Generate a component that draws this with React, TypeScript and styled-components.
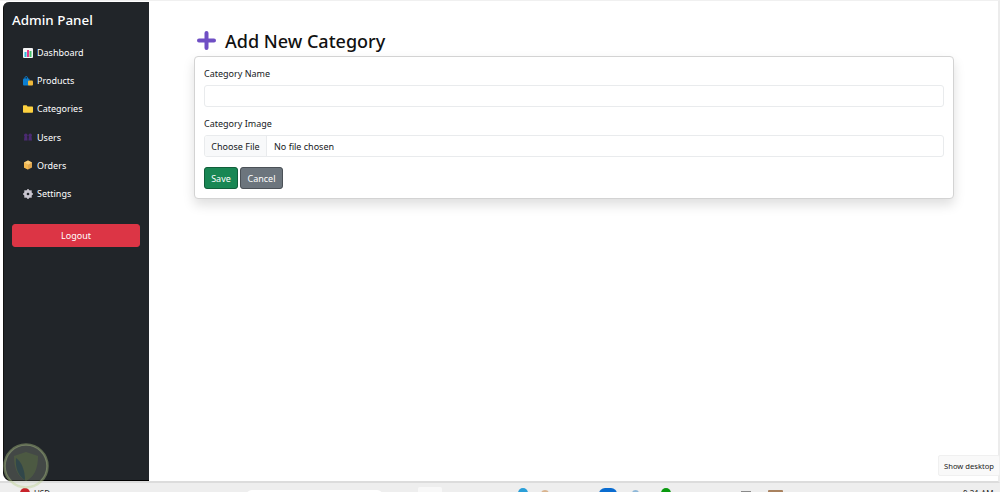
import styled, { createGlobalStyle } from 'styled-components'

const GlobalStyle = createGlobalStyle`
  html, body {
    margin: 0;
    padding: 0;
    background: #fff;
    overflow: hidden;
  }
  * { box-sizing: border-box; }
`
const Page = styled.div`
  position: relative;
  width: 1000px;
  height: 492px;
  overflow: hidden;
  display: flex;
  flex-direction: column;
  font-family: "Noto Sans", "Open Sans", sans-serif;
  color: #16191c;
  background: #fff;
`
const Workspace = styled.div`
  height: 483px;
  flex: none;
  display: flex;
  padding: 1px 3px 0 3px;
  border-top: 1px solid #f0f0f0;
  border-right: 2px solid #ececec;
  border-bottom: 2px solid #dcdcdc;
`
const Sidebar = styled.aside`
  width: 146px;
  flex: none;
  background: #212529;
  border-radius: 6px 0 0 8px;
  border-left: 1px solid #111;
  border-bottom: 1px solid #000;
  padding: 8px 8px 0 8px;
  color: #fff;
`
const Brand = styled.h1`
  margin: 0 0 8.5px 0;
  font-size: 13.4px;
  line-height: 20px;
  font-weight: 500;
`
const Nav = styled.nav`
  display: flex;
  flex-direction: column;
  padding-left: 11px;
`
const NavItem = styled.a`
  height: 28.2px;
  display: flex;
  align-items: center;
  gap: 4px;
  font-size: 9px;
  color: #fff;
`
const IconBox = styled.svg`
  width: 10px;
  height: 10px;
  flex: none;
`
const LogoutButton = styled.button`
  display: block;
  width: 128px;
  height: 23px;
  margin-top: 16.5px;
  border: 1px solid #dc3545;
  border-radius: 3px;
  background: #dc3545;
  color: #fff;
  font-family: inherit;
  font-size: 9px;
  padding: 0;
`
const Content = styled.main`
  flex: 1;
  padding: 27px 45px 0 45px;
`
const Title = styled.h2`
  margin: 0 0 2px 0;
  height: 25px;
  padding: 0 0 2px 3px;
  display: flex;
  align-items: center;
  gap: 9px;
  font-size: 18px;
  font-weight: 500;
  color: #111;
`
const Card = styled.section`
  width: 760px;
  height: 143px;
  background: #fff;
  border: 1px solid #d3d3d3;
  border-radius: 4px;
  box-shadow: 0 6px 12px rgba(0, 0, 0, 0.13);
  padding: 10px 9px 0 9px;
`
const Label = styled.label`
  display: block;
  font-size: 9px;
  line-height: 14px;
  margin-bottom: 4px;
`
const Field = styled.div`
  height: 22px;
  width: 740px;
  border: 1px solid #e9ebed;
  border-radius: 3px;
  margin-bottom: 10px;
  display: flex;
  align-items: stretch;
  font-size: 9px;
  overflow: hidden;
`
const FileButton = styled.span`
  width: 62px;
  flex: none;
  display: flex;
  align-items: center;
  justify-content: center;
  background: #f8f9fa;
  border-right: 1px solid #e9ebed;
`
const FileName = styled.span`
  display: flex;
  align-items: center;
  padding-left: 7px;
`
const Actions = styled.div`
  display: flex;
  gap: 2px;
`
const ActionButton = styled.button<{ $color: string; $width: number }>`
  width: ${p => p.$width}px;
  height: 22px;
  padding: 0;
  border: 1px solid ${p => p.$color};
  outline: 1px solid rgba(0, 0, 0, 0.3);
  outline-offset: -1px;
  border-radius: 3px;
  background: ${p => p.$color};
  color: #fff;
  font-family: inherit;
  font-size: 9px;
`
const Taskbar = styled.footer`
  flex: 1;
  background: #eeeeee;
  display: flex;
  align-items: flex-start;
  padding: 4px 0 0 20px;
  overflow: hidden;
  font-size: 8px;
  line-height: 10px;
  color: #222;
`
const TrayIcon = styled.span<{ $color: string; $width: number; $gap: number; $top: number; $radius?: number }>`
  width: ${p => p.$width}px;
  height: 12px;
  flex: none;
  margin: ${p => p.$top}px 0 0 ${p => p.$gap}px;
  border-radius: ${p => p.$radius ?? 6}px ${p => p.$radius ?? 6}px 0 0;
  background: ${p => p.$color};
`
const TrayText = styled.span<{ $gap: number }>`
  flex: none;
  margin: 2px 0 0 ${p => p.$gap}px;
`
const SearchBox = styled.span`
  width: 137px;
  height: 12px;
  flex: none;
  margin: 3px 0 0 196px;
  background: #fff;
  border-radius: 6px;
`
const PeekTip = styled.div`
  position: absolute;
  right: 0;
  top: 455px;
  width: 62px;
  height: 21px;
  display: flex;
  align-items: center;
  justify-content: center;
  font-size: 7.6px;
  background: #f9f9f9;
  border: 1px solid #f0f0f0;
  border-radius: 2px;
  color: #222;
`
const Watermark = styled.svg`
  position: absolute;
  left: 2px;
  top: 442px;
  width: 50px;
  height: 50px;
  filter: blur(0.6px);
`

function App() {
  return (
    <Page>
      <GlobalStyle />
      <Workspace>
        <Sidebar>
          <Brand>Admin Panel</Brand>
          <Nav>
            <NavItem>
              <IconBox viewBox="0 0 10 10">
                <rect width="10" height="10" rx="1" fill="#f4f4f4" />
                <rect x="1.5" y="4" width="2" height="5" fill="#2fb8d8" />
                <rect x="4" y="2" width="2" height="7" fill="#e8388a" />
                <rect x="6.5" y="3" width="2" height="6" fill="#47c26c" />
              </IconBox>
              Dashboard
            </NavItem>
            <NavItem>
              <IconBox viewBox="0 0 10 10">
                <rect x="0" y="2.5" width="6.5" height="7" rx="1" fill="#0b7ed0" />
                <path d="M2 3V1.4C2 .4 4.5 .4 4.5 1.4V3" stroke="#0b7ed0" fill="none" />
                <rect x="5" y="4.5" width="5" height="5" rx="1" fill="#f0b93a" />
              </IconBox>
              Products
            </NavItem>
            <NavItem>
              <IconBox viewBox="0 0 10 10">
                <path d="M0 2.2C0 1.6.4 1.2 1 1.2h2.6l1 1.2H9c.6 0 1 .4 1 1v4.4c0 .6-.4 1-1 1H1c-.6 0-1-.4-1-1z" fill="#fdd13f" />
              </IconBox>
              Categories
            </NavItem>
            <NavItem>
              <IconBox viewBox="0 0 10 10">
                <circle cx="2.8" cy="3.4" r="1.8" fill="#4b2a72" />
                <circle cx="7.2" cy="3.4" r="1.8" fill="#4b2a72" />
                <path d="M1 8.5 1.4 5h2.8l.4 3.5zM5.4 8.5 5.8 5h2.8l.4 3.5z" fill="#4b2a72" />
              </IconBox>
              Users
            </NavItem>
            <NavItem>
              <IconBox viewBox="0 0 10 10">
                <path d="M5 .6 9 2.6v4.8L5 9.6 1 7.4V2.6z" fill="#e0a64e" />
                <path d="M5 .6 9 2.6 5 4.8 1 2.6z" fill="#f6cf7d" />
                <path d="M5 4.8v4.8L1 7.4V2.6z" fill="#f2b84f" />
              </IconBox>
              Orders
            </NavItem>
            <NavItem>
              <IconBox viewBox="0 0 10 10">
                <circle cx="5" cy="5" r="3.1" fill="none" stroke="#c9c6d0" strokeWidth="1.9" />
                <path d="M5 0v10M0 5h10M1.5 1.5l7 7M8.5 1.5l-7 7" stroke="#c9c6d0" strokeWidth="1.5" />
                <circle cx="5" cy="5" r="1.3" fill="#212529" />
              </IconBox>
              Settings
            </NavItem>
          </Nav>
          <LogoutButton>Logout</LogoutButton>
        </Sidebar>
        <Content>
          <Title>
            <svg width="19" height="19" viewBox="0 0 19 19">
              <path d="M9.5 2v15M2 9.5h15" stroke="#6f4fc4" strokeWidth="4" strokeLinecap="round" />
            </svg>
            Add New Category
          </Title>
          <Card>
            <Label>Category Name</Label>
            <Field />
            <Label>Category Image</Label>
            <Field>
              <FileButton>Choose File</FileButton>
              <FileName>No file chosen</FileName>
            </Field>
            <Actions>
              <ActionButton $color="#198754" $width={34}>Save</ActionButton>
              <ActionButton $color="#6c757d" $width={43}>Cancel</ActionButton>
            </Actions>
          </Card>
        </Content>
      </Workspace>
      <Taskbar>
        <TrayIcon $color="#c8242b" $width={10} $gap={0} $top={1} />
        <TrayText $gap={4}>USD</TrayText>
        <SearchBox />
        <TrayIcon $color="#f8f8f8" $width={24} $gap={35} $top={0} $radius={2} />
        <TrayIcon $color="#2a9fd8" $width={10} $gap={76} $top={1} />
        <TrayIcon $color="#d9b48f" $width={8} $gap={13} $top={3} />
        <TrayIcon $color="#0a6cd0" $width={18} $gap={50} $top={1} />
        <TrayIcon $color="#8fb8d8" $width={7} $gap={15} $top={3} />
        <TrayIcon $color="#0a9a10" $width={10} $gap={22} $top={1} />
        <TrayIcon $color="#8a8a8a" $width={10} $gap={70} $top={4} $radius={0} />
        <TrayIcon $color="#a9825f" $width={15} $gap={17} $top={3} $radius={1} />
        <TrayText $gap={180}>9:31 AM</TrayText>
      </Taskbar>
      <PeekTip>Show desktop</PeekTip>
      <Watermark viewBox="0 0 50 50">
        <circle cx="24" cy="24" r="21.5" fill="#cfd8c0" fillOpacity="0.2" stroke="#b9cf8c" strokeOpacity="0.4" strokeWidth="2.5" />
        <path d="M12 14 24 10l12 4c0 13-4 21-12 25C16 35 12 27 12 14z" fill="#56683f" fillOpacity="0.55" />
        <path d="M14 16c6 4 9 13 9 22-6-3-10-11-9-22z" fill="#26404e" fillOpacity="0.7" />
      </Watermark>
    </Page>
  )
}

export default App
